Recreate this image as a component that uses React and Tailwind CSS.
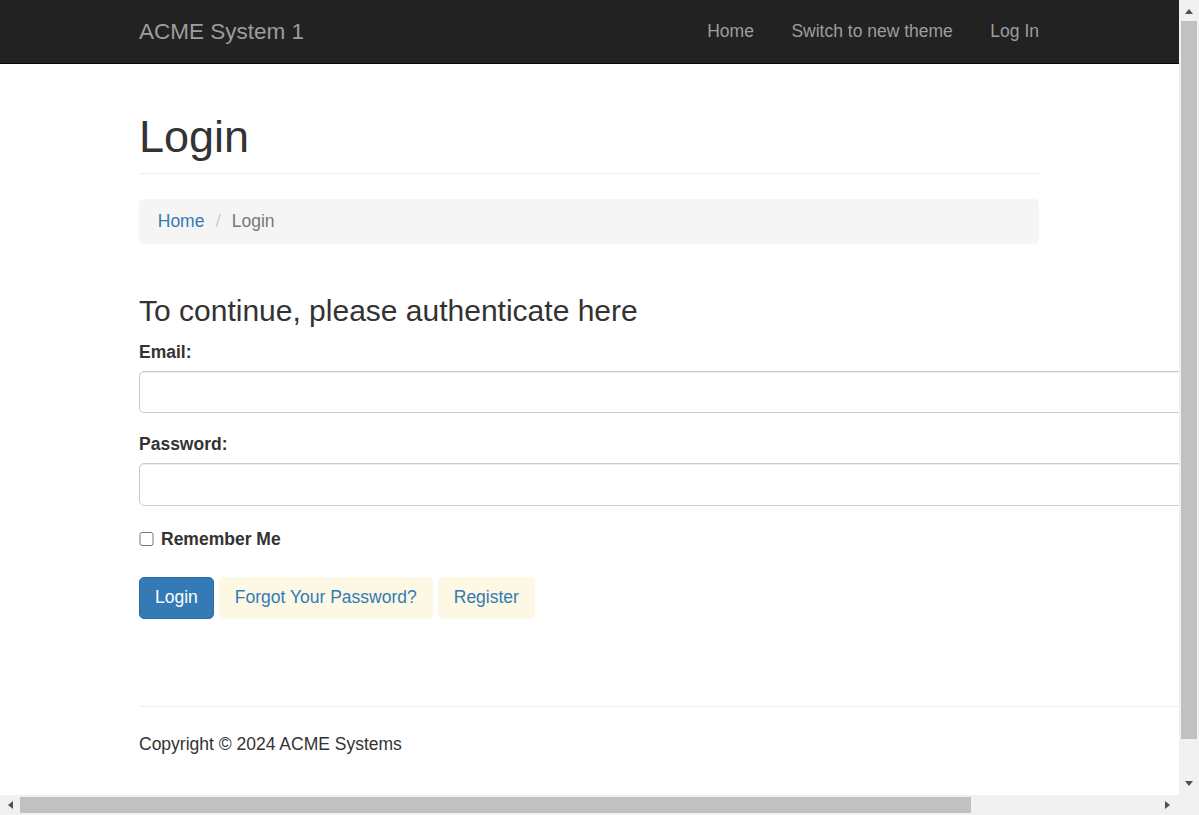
function Arrow({ dir }) {
  // small solid triangle used on the scrollbar buttons
  const pts = {
    up: '0,6 4,1 8,6',
    down: '0,1 4,6 8,1',
    left: '6,0 1,4 6,8',
    right: '1,0 6,4 1,8',
  }[dir];
  const horiz = dir === 'left' || dir === 'right';
  return (
    <svg width={horiz ? 7 : 8} height={horiz ? 8 : 7} viewBox={horiz ? '0 0 7 8' : '0 0 8 7'}>
      <polygon points={pts} fill="#505050" />
    </svg>
  );
}

function Page() {
  return (
    <div className="font-['Liberation_Sans',Arial,sans-serif] text-[17.5px] leading-[25px] text-[#333]">
      {/* top navbar */}
      <nav className="h-[64px] bg-[#222] border-b border-[#080808]">
        <div className="ml-[139px] w-[900px] h-full flex items-center justify-between">
          <a href="#" className="text-[22.5px] leading-[25px] text-[#9d9d9d]">ACME System 1</a>
          <ul className="flex items-center gap-[37.5px] text-[#9d9d9d]">
            <li><a href="#">Home</a></li>
            <li><a href="#">Switch to new theme</a></li>
            <li><a href="#">Log In</a></li>
          </ul>
        </div>
      </nav>

      <div className="ml-[139px]">
        <div className="w-[900px] pt-[48px] pb-[11px] border-b border-[#eee] mb-[25px]">
          <h1 className="text-[45px] leading-[49.5px] font-normal">Login</h1>
        </div>

        <ol className="w-[900px] h-[45px] flex items-center px-[18.75px] bg-[#f5f5f5] rounded-[5px]">
          <li><a href="#" className="text-[#337ab7]">Home</a></li>
          <li className="ml-[5px] pl-[6.25px] pr-[6.25px] text-[#ccc]">/{'\u00a0'}</li>
          <li className="text-[#777]">Login</li>
        </ol>

        <form className="mt-[50px]" onSubmit={(e) => e.preventDefault()}>
          <h3 className="text-[30px] leading-[33px] font-normal mb-[13px]">To continue, please authenticate here</h3>

          <div className="mb-[18.75px]">
            <label className="block font-bold mb-[6.25px]">Email:</label>
            <input type="email" className="block w-[1200px] h-[42.5px] px-[15px] border border-[#ccc] rounded-[5px] shadow-[inset_0_1px_1px_rgba(0,0,0,0.075)] outline-none" />
          </div>

          <div className="mb-[18.75px]">
            <label className="block font-bold mb-[6.25px]">Password:</label>
            <input type="password" className="block w-[1200px] h-[42.5px] px-[15px] border border-[#ccc] rounded-[5px] shadow-[inset_0_1px_1px_rgba(0,0,0,0.075)] outline-none" />
          </div>

          <label className="flex items-center gap-[7px] font-bold pt-[2px]">
            <input type="checkbox" className="w-[15px] h-[14px] m-0 mt-[-1px]" />
            <span>Remember Me</span>
          </label>

          <div className="flex gap-[5px] mt-[25px]">
            <button type="submit" className="h-[42.5px] px-[15px] border border-[#2e6da4] bg-[#337ab7] text-white rounded-[5px]">Login</button>
            <a href="#" className="h-[42.5px] px-[15px] flex items-center border border-[#fcf8e3] bg-[#fcf8e3] text-[#337ab7] rounded-[5px]">Forgot Your Password?</a>
            <a href="#" className="h-[42.5px] px-[15px] flex items-center border border-[#fcf8e3] bg-[#fcf8e3] text-[#337ab7] rounded-[5px]">Register</a>
          </div>
        </form>

        <footer className="mt-[87px] pb-[80px]">
          <hr className="w-[1200px] border-0 border-t border-[#eee] mb-[25px]" />
          <p>Copyright © 2024 ACME Systems</p>
        </footer>
      </div>
    </div>
  );
}

export default function App() {
  return (
    <div className="w-[1199px] h-[815px] flex flex-col overflow-hidden bg-white">
      <div className="flex h-[795px]">
        <div className="w-[1179px] h-full overflow-hidden">
          <Page />
        </div>
        {/* vertical scrollbar */}
        <div className="w-[20px] h-full flex flex-col bg-[#f1f1f1]">
          <div className="h-[20px] flex items-center justify-center pt-[2px]"><Arrow dir="up" /></div>
          <div className="flex-1 px-[2px] pt-[1px]">
            <div className="h-[718px] bg-[#c1c1c1]" />
          </div>
          <div className="h-[20px] flex items-center justify-center pb-[4px]"><Arrow dir="down" /></div>
        </div>
      </div>
      {/* horizontal scrollbar */}
      <div className="flex h-[20px]">
        <div className="w-[1179px] h-full flex bg-[#f1f1f1]">
          <div className="w-[20px] flex items-center justify-center"><Arrow dir="left" /></div>
          <div className="flex-1 py-[2px]">
            <div className="w-[951px] h-full bg-[#c1c1c1]" />
          </div>
          <div className="w-[20px] flex items-center justify-center pr-[4px]"><Arrow dir="right" /></div>
        </div>
        <div className="w-[20px] h-full bg-[#f1f1f1]" />
      </div>
    </div>
  );
}
